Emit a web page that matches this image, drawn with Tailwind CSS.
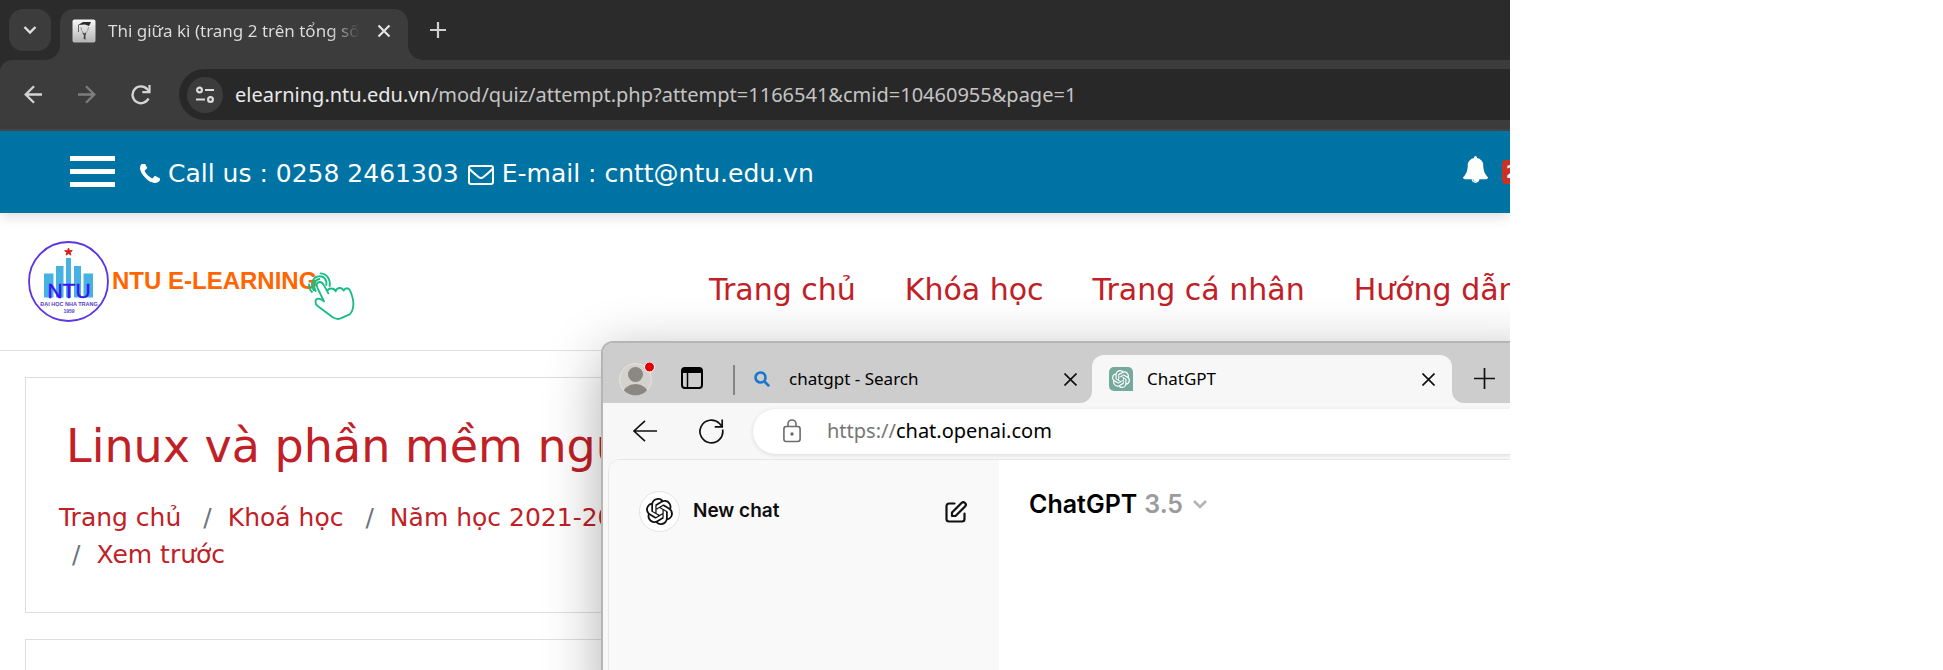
<!DOCTYPE html>
<html lang="vi">
<head>
<meta charset="utf-8">
<meta name="viewport" content="width=device-width, initial-scale=1">
<title>Thi giữa kì (trang 2 trên tổng số)</title>
<script src="https://cdn.jsdelivr.net/npm/@tailwindcss/browser@4"></script>
</head>
<body class="bg-white">
<svg class="hidden" aria-hidden="true">
  <symbol id="knot" viewBox="0 0 24 24"><path d="M22.2819 9.8211a5.9847 5.9847 0 0 0-.5157-4.9108 6.0462 6.0462 0 0 0-6.5098-2.9A6.0651 6.0651 0 0 0 4.9807 4.1818a5.9847 5.9847 0 0 0-3.9977 2.9 6.0462 6.0462 0 0 0 .7427 7.0966 5.98 5.98 0 0 0 .511 4.9107 6.051 6.051 0 0 0 6.5146 2.9001A5.9847 5.9847 0 0 0 13.2599 24a6.0557 6.0557 0 0 0 5.7718-4.2058 5.9894 5.9894 0 0 0 3.9977-2.9001 6.0557 6.0557 0 0 0-.7475-7.0729zm-9.022 12.6081a4.4755 4.4755 0 0 1-2.8764-1.0408l.1419-.0804 4.7783-2.7582a.7948.7948 0 0 0 .3927-.6813v-6.7369l2.02 1.1686a.071.071 0 0 1 .038.052v5.5826a4.504 4.504 0 0 1-4.4945 4.4944zm-9.6607-4.1254a4.4708 4.4708 0 0 1-.5346-3.0137l.142.0852 4.783 2.7582a.7712.7712 0 0 0 .7806 0l5.8428-3.3685v2.3324a.0804.0804 0 0 1-.0332.0615L9.74 19.9502a4.4992 4.4992 0 0 1-6.1408-1.6464zM2.3408 7.8956a4.485 4.485 0 0 1 2.3655-1.9728V11.6a.7664.7664 0 0 0 .3879.6765l5.8144 3.3543-2.0201 1.1685a.0757.0757 0 0 1-.071 0l-4.8303-2.7865A4.504 4.504 0 0 1 2.3408 7.872zm16.5963 3.8558L13.1038 8.364 15.1192 7.2a.0757.0757 0 0 1 .071 0l4.8303 2.7913a4.4944 4.4944 0 0 1-.6765 8.1042v-5.6772a.79.79 0 0 0-.407-.667zm2.0107-3.0231l-.142-.0852-4.7735-2.7818a.7759.7759 0 0 0-.7854 0L9.409 9.2297V6.8974a.0662.0662 0 0 1 .0284-.0615l4.8303-2.7866a4.4992 4.4992 0 0 1 6.6802 4.66zM8.3065 12.863l-2.02-1.1638a.0804.0804 0 0 1-.038-.0567V6.0742a4.4992 4.4992 0 0 1 7.3757-3.4537l-.142.0805L8.704 5.459a.7948.7948 0 0 0-.3927.6813zm1.0976-2.3654l2.602-1.4998 2.6069 1.4998v2.9994l-2.5974 1.4997-2.6067-1.4997Z"/></symbol>
</svg>
<div class="mr-[433px] min-w-0">
<div class="relative flex h-screen flex-col overflow-hidden bg-white">

  <!-- Chrome tab strip -->
  <div class="flex h-15 shrink-0 items-end bg-[#2b2b2b] pl-[9px]">
    <button aria-label="Tìm kiếm thẻ" class="mb-[9px] flex size-[42px] shrink-0 items-center justify-center rounded-[14px] bg-[#3c3c3c]">
      <svg class="size-4" viewBox="0 0 16 16" fill="none" stroke="#dedede" stroke-width="2.4"><path d="M2.500 5l5.500 5.500L13.500 5"/></svg>
    </button>
    <div class="relative ml-[9px] flex h-[51px] w-[348px] shrink-0 items-center rounded-t-[14px] bg-[#3c3c3c] pb-2 pl-3 pr-[17px]">
      <svg class="absolute -left-[15px] bottom-0 size-[15px]" viewBox="0 0 15 15" fill="#3c3c3c"><path d="M15 0v15H0A15 15 0 0 0 15 0"/></svg>
      <svg class="absolute -right-[15px] bottom-0 size-[15px]" viewBox="0 0 15 15" fill="#3c3c3c"><path d="M0 0v15h15A15 15 0 0 1 0 0"/></svg>
      <svg class="size-6 shrink-0" viewBox="0 0 24 24"><defs><linearGradient id="fav" x2="0" y2="1"><stop stop-color="#f8f8f8"/><stop offset="1" stop-color="#b4b4b4"/></linearGradient></defs><rect x=".5" y=".5" width="23" height="23" rx="2" fill="url(#fav)"/><path d="M6 6l5-3h8l-2 4-4-1.500z" fill="#2a2a2a"/><path d="M6.500 6v7" stroke="#666" fill="none"/><path d="M9 8q0 4 2.500 6M16.500 8q0 4-3 6" stroke="#999" fill="none"/><path d="M10 13.500l2.500 1 2-1-1 3v4.500l-2-1.500.5-3z" fill="#444"/></svg>
      <span class="ml-3 min-w-0 flex-1 overflow-hidden whitespace-nowrap bg-linear-to-r from-[#dfdfdf] from-88% to-transparent bg-clip-text font-['Noto_Sans','Open_Sans',sans-serif] text-[17px] leading-6 text-transparent">Thi giữa kì (trang 2 trên tổng số</span>
      <button aria-label="Đóng thẻ" class="ml-[17px] shrink-0"><svg class="size-[14px]" viewBox="0 0 14 14" stroke="#e4e4e4" stroke-width="2.200"><path d="M1.500 1.500l11 11M12.500 1.500l-11 11"/></svg></button>
    </div>
    <button aria-label="Thẻ mới" class="mb-[22px] ml-[22px] shrink-0"><svg class="size-4" viewBox="0 0 16 16" stroke="#d0d0d0" stroke-width="2.200"><path d="M8 0v16M0 8h16"/></svg></button>
  </div>

  <!-- Chrome toolbar -->
  <div class="shrink-0 bg-[#2b2b2b]">
    <div class="flex h-[71px] items-center rounded-tl-[12px] border-b-2 border-[#474747] bg-[#3c3c3c] pl-6">
      <button aria-label="Quay lại" class="shrink-0"><svg class="size-[19px]" viewBox="0 0 19 19" fill="none" stroke="#d4d4d4" stroke-width="2.300"><path d="M18 9.500H2M10 1.200L1.700 9.500l8.300 8.300"/></svg></button>
      <button aria-label="Tiến" class="ml-[34px] shrink-0"><svg class="size-[19px]" viewBox="0 0 19 19" fill="none" stroke="#7d7d7d" stroke-width="2.300"><path d="M1 9.500h16M9 1.200l8.300 8.300L9 17.800"/></svg></button>
      <button aria-label="Tải lại" class="ml-[35px] shrink-0"><svg class="size-5" viewBox="0 0 20 20" fill="none" stroke="#d4d4d4" stroke-width="2.400"><path d="M17.500 13.500A8.400 8.400 0 1 1 16.300 4.300L18 6"/><path d="M18.500 0v7.200h-7.200" stroke-width="2.200"/></svg></button>
      <div class="ml-7 flex h-[51px] min-w-0 flex-1 items-center rounded-l-full bg-[#282828] pl-2">
        <button aria-label="Thông tin trang" class="flex size-9 shrink-0 items-center justify-center rounded-full bg-[#3c3c3c]">
          <svg class="size-5" viewBox="0 0 20 20" fill="none" stroke="#dcdcdc" stroke-width="2.200"><circle cx="4.500" cy="5" r="2.400"/><path d="M10 5h9M1 14.500h9"/><circle cx="15.500" cy="14.500" r="2.400"/></svg>
        </button>
        <p class="ml-3 whitespace-nowrap font-['Noto_Sans','Open_Sans',sans-serif] text-[20px] leading-7 text-[#c4c4c4]"><span class="text-[#e8e8e8]">elearning.ntu.edu.vn</span>/mod/quiz/attempt.php?attempt=1166541&amp;cmid=10460955&amp;page=1</p>
      </div>
    </div>
  </div>

  <!-- Contact bar -->
  <div class="relative z-10 flex h-[82px] shrink-0 items-center bg-[#0073a5] pl-[70px] font-[Verdana,'DejaVu_Sans',sans-serif] text-[25px] text-white shadow-[0_4px_12px_rgba(0,0,0,0.12)]">
    <button aria-label="Menu" class="mb-[2px] flex w-[45px] shrink-0 flex-col gap-2"><span class="h-[5px] bg-white"></span><span class="h-[5px] bg-white"></span><span class="h-[5px] bg-white"></span></button>
    <svg class="ml-[25px] mt-1 size-5 shrink-0" viewBox="192 192 1408 1408" fill="#fff"><path d="M1600 1240q0 27-10 70.500t-21 68.500q-21 50-122 106-94 51-186 51-27 0-53-3.500t-57.500-12.500-47-14.500-55.500-20.500-49-18q-98-35-175-83-127-79-264-216t-216-264q-48-77-83-175-3-9-18-49t-20.500-55.500-14.500-47-12.500-57.500-3.500-53q0-92 51-186 56-101 106-122 25-11 68.500-21t70.500-10q14 0 21 3 18 6 53 76 11 19 30 54t35 63.500 31 53.500q3 4 17.500 25t21.500 35.500 7 28.500q0 20-28.500 50t-62 55-62 53-28.500 46q0 9 5 22.500t8.500 20.500 14 24 11.500 19q76 137 174 235t235 174q2 1 19 11.500t24 14 20.500 8.500 22.500 5q18 0 46-28.500t53-62 55-62 50-28.500q14 0 28.500 7t35.500 21.500 25 17.500q25 15 53.500 31t63.500 35 54 30q70 35 76 53 3 7 3 21z"/></svg>
    <span class="ml-2 mt-1 whitespace-nowrap">Call us : 0258 2461303</span>
    <svg class="ml-[9px] mt-[6px] h-5 w-[26px] shrink-0" viewBox="0 0 26 20" fill="none" stroke="#fff" stroke-width="2"><rect x="1" y="1" width="24" height="18" rx="2"/><path d="M1.500 4c3 3 6 5.500 9 8q2.500 2 5 0c3-2.500 6-5 9-8"/></svg>
    <a href="mailto:cntt@ntu.edu.vn" class="ml-2 mt-1 whitespace-nowrap">E-mail : cntt@ntu.edu.vn</a>
    <button aria-label="Thông báo, 2 mới" class="-mr-3 ml-auto flex shrink-0 items-center">
      <svg class="mb-[5px] size-[27px]" viewBox="0 0 1792 1792" fill="#fff"><path d="M912 1696q0-16-16-16-59 0-101.500-42.500t-42.500-101.500q0-16-16-16t-16 16q0 73 51.500 124.500t124.500 51.500q16 0 16-16zm816-288q0 52-38 90t-90 38h-448q0 106-75 181t-181 75-181-75-75-181h-448q-52 0-90-38t-38-90q50-42 91-88t85-119.500 74.500-158.500 50-206 19.500-260q0-152 117-282.500t307-158.500q-8-19-8-39 0-40 28-68t68-28 68 28 28 68q0 20-8 39 190 28 307 158.500t117 282.500q0 139 19.500 260t50 206 74.500 158.500 85 119.500 91 88z"/></svg>
      <span class="ml-[13px] w-5 rounded bg-[#ca3120] pl-1 text-left text-[18px] font-bold leading-6">2</span>
    </button>
  </div>

  <!-- Site header -->
  <header class="flex h-[138px] shrink-0 items-center border-b border-[#dee2e6] pl-7 font-[Verdana,'DejaVu_Sans',sans-serif]">
    <a href="#" aria-label="NTU E-Learning" class="shrink-0">
      <svg class="h-[82px] w-[328px]" viewBox="0 0 328 82">
        <circle cx="40.500" cy="40.500" r="39.500" fill="#fff" stroke="#5b35e8" stroke-width="1.800"/>
        <path d="M40.500 7l.9 2.700h2.900l-2.300 1.700.9 2.700-2.400-1.700-2.400 1.700.9-2.700-2.300-1.700h2.900z" fill="#d8201c" stroke="#d8201c"/>
        <path d="M16 32.500h9.500V56.500h-9.500zM28 25h7.500v31.500H28zM38 17h5v39.500h-5zM46 25h7v31.500h-7zM55.500 32.500H65v24h-9.500z" fill="#45b2e2"/>
        <text x="41" y="56.500" text-anchor="middle" font-family="Liberation Sans" font-size="21" fill="#3a10f5" stroke="#3a10f5" stroke-width=".5">NTU</text>
        <text x="41" y="65" text-anchor="middle" font-family="Liberation Sans" font-size="5.500" font-weight="700" fill="#5540c8">ĐẠI HỌC NHA TRANG</text>
        <text x="41" y="71.500" text-anchor="middle" font-family="Liberation Sans" font-size="5" font-weight="700" fill="#5540c8">1959</text>
        <text x="84" y="48" font-family="Liberation Sans" font-size="24" font-weight="700" fill="#ff6600">NTU E-LEARNING</text>
        <g transform="translate(268 20) scale(.3333)" fill="none" stroke="#16bd83" stroke-width="5.500" stroke-linecap="round" stroke-linejoin="round">
          <path d="M84 121L64 80C60 70 62 64 71 63C78 63 81 67 84 73L97 97M94 90C98 80 113 80 119 91C122 79 137 77 143 89C148 79 158 80 162 88C170 106 173 118 172 132C171 146 167 155 161 160L132 173C124 176 117 173 110 169L65 135C56 128 56 115 66 113C72 112 78 117 84 121"/>
          <path d="M54 88C42 74 48 48 68 46C84 44 93 56 91 72"/><path d="M48 93C42 88 39 80 39 70M74 37C94 38 104 56 101 75"/><path d="M59 90C50 76 55 56 70 54"/>
        </g>
      </svg>
    </a>
    <nav class="ml-[353px] flex gap-[49px] whitespace-nowrap pt-4 text-[30px] text-[#c02026]">
      <a href="#">Trang chủ</a><a href="#">Khóa học</a><a href="#">Trang cá nhân</a><a href="#">Hướng dẫn</a>
    </nav>
  </header>

  <!-- Course title and breadcrumb -->
  <main class="flex flex-1 flex-col gap-[26px] pl-[25px] pt-[26px] font-[Verdana,'DejaVu_Sans',sans-serif] text-[#c02026]">
    <section class="h-[236px] shrink-0 border border-r-0 border-[#dedede] pl-[33px] pt-10">
      <h1 class="whitespace-nowrap pl-[7px] text-[46px] leading-[56px]">Linux và phần mềm nguồn mở</h1>
      <ol class="mt-[25px] flex whitespace-nowrap text-[25px] leading-[37px]">
        <li><a href="#">Trang chủ</a></li>
        <li class="flex gap-4 pl-[22px]"><span class="text-[#6c757d]">/</span><a href="#">Khoá học</a></li>
        <li class="flex gap-4 pl-[22px]"><span class="text-[#6c757d]">/</span><a href="#">Năm học 2021-2022</a></li>
      </ol>
      <ol class="flex whitespace-nowrap text-[25px] leading-[37px]">
        <li class="flex gap-4 pl-[13px]"><span class="text-[#6c757d]">/</span><a href="#">Xem trước</a></li>
      </ol>
    </section>
    <section class="flex-1 border border-b-0 border-r-0 border-[#dedede]"></section>
  </main>

  <!-- Edge window on top of the page -->
  <div class="absolute -bottom-10 left-[601px] -right-10 top-[341px] z-20 flex flex-col overflow-hidden rounded-tl-[12px] border-2 border-[#b5b5b5] bg-[#f7f7f7] pr-[38px] shadow-[0_14px_56px_rgba(0,0,0,0.32)]">
    <div class="-mr-[38px] flex h-15 shrink-0 items-end bg-[#cdcdcd] pl-4">
      <button aria-label="Profile" class="mb-[7px] shrink-0">
        <svg class="h-[34px] w-9" viewBox="0 0 36 34"><defs><clipPath id="av"><circle cx="16.500" cy="17.500" r="16"/></clipPath></defs><circle cx="16.500" cy="17.500" r="16" fill="#d4d2ce" stroke="#e6e4e0"/><g clip-path="url(#av)" fill="#8b8783"><circle cx="16.500" cy="12.500" r="7.500"/><ellipse cx="16.500" cy="32" rx="12.500" ry="10"/></g><circle cx="30.500" cy="5" r="5" fill="#e10000" stroke="#fff"/></svg>
      </button>
      <button aria-label="Tab actions" class="mb-[14px] ml-[26px] shrink-0"><svg class="size-[22px]" viewBox="0 0 22 22" fill="none" stroke="#000" stroke-width="2"><rect x="1" y="1" width="20" height="20" rx="3"/><path d="M1 3.500h20" stroke-width="5"/><path d="M6.500 6v15" stroke-width="1.500"/></svg></button>
      <span class="mb-2 ml-[30px] h-[30px] w-[2px] shrink-0 bg-[#858585]"></span>
      <div class="mb-2 ml-[19px] flex h-8 w-[323px] shrink-0 items-center font-['Noto_Sans','Open_Sans',sans-serif] text-[17px]">
        <svg class="size-4 shrink-0" viewBox="0 0 16 16" fill="none" stroke="#1878d0" stroke-width="2.600"><circle cx="6.500" cy="6.500" r="5"/><path d="M10 10l5.200 5.200"/></svg>
        <span class="ml-[19px] flex-1">chatgpt - Search</span>
        <button aria-label="Close tab"><svg class="size-[13px]" viewBox="0 0 13 13" stroke="#111" stroke-width="1.700"><path d="M.5.5l12 12M12.500.5l-12 12"/></svg></button>
      </div>
      <div class="relative ml-[15px] flex h-12 w-[360px] shrink-0 items-center rounded-t-[12px] bg-[#f7f7f7] pl-[17px] pr-[17px] font-['Noto_Sans','Open_Sans',sans-serif] text-[17px]">
        <svg class="absolute -left-3 bottom-0 size-3" viewBox="0 0 12 12" fill="#f7f7f7"><path d="M12 0v12H0A12 12 0 0 0 12 0"/></svg>
        <svg class="absolute -right-3 bottom-0 size-3" viewBox="0 0 12 12" fill="#f7f7f7"><path d="M0 0v12h12A12 12 0 0 1 0 0"/></svg>
        <span class="flex size-6 shrink-0 items-center justify-center rounded-[5px] rounded-br-none bg-[#75a99c]"><svg class="size-[18px]" fill="#fff"><use href="#knot"/></svg></span>
        <span class="ml-[14px] flex-1">ChatGPT</span>
        <button aria-label="Close tab"><svg class="size-[13px]" viewBox="0 0 13 13" stroke="#111" stroke-width="1.700"><path d="M.5.5l12 12M12.500.5l-12 12"/></svg></button>
      </div>
      <button aria-label="New tab" class="mb-[14px] ml-[22px] shrink-0"><svg class="size-[21px]" viewBox="0 0 21 21" stroke="#111" stroke-width="1.700"><path d="M10.500 0v21M0 10.500h21"/></svg></button>
    </div>
    <div class="flex h-14 shrink-0 items-center pl-[30px]">
      <button aria-label="Back" class="shrink-0"><svg class="h-[22px] w-6" viewBox="0 0 24 22" fill="none" stroke="#111" stroke-width="1.600"><path d="M24 11H1M12 .8L1 11l11 10.200"/></svg></button>
      <button aria-label="Refresh" class="ml-[42px] shrink-0"><svg class="size-[25px]" viewBox="0 0 25 25" fill="none" stroke="#111" stroke-width="1.700"><path d="M23.600 10.500A11.400 11.400 0 1 1 20.500 4.500L23 7.500M23.200 .5v7.300h-7.500"/></svg></button>
      <div class="-mr-10 ml-[29px] flex h-[45px] min-w-0 flex-1 items-center rounded-l-full bg-white pl-[30px] shadow-[0_1px_4px_rgba(0,0,0,0.12)]">
        <svg class="h-6 w-[18px] shrink-0" viewBox="0 0 18 24" fill="none" stroke="#6b6b6b" stroke-width="1.600"><rect x=".9" y="7.500" width="16.200" height="15" rx="2.500"/><path d="M5 7.500V5a4 4 0 0 1 8 0v2.500"/><circle cx="9" cy="15" r=".9" fill="#6b6b6b"/></svg>
        <p class="ml-[26px] whitespace-nowrap font-['Noto_Sans','Open_Sans',sans-serif] text-[20px] text-black"><span class="text-[#767676]">https://</span>chat.openai.com</p>
      </div>
    </div>
    <div class="-mr-10 ml-[5px] flex flex-1 overflow-hidden rounded-tl-[12px] border border-[#e6e6e6] bg-white font-[Inter,'Liberation_Sans',sans-serif]">
      <aside class="w-[390px] shrink-0 bg-[#f9f9f9] pl-[30px] pr-8 pt-[31px]">
        <div class="flex items-center">
          <span class="flex size-[41px] items-center justify-center rounded-full border border-[#e3e3e3] bg-white"><svg class="size-[27px]" fill="#111"><use href="#knot"/></svg></span>
          <a href="#" class="ml-[13px] flex-1 text-[19px] font-semibold text-[#0d0d0d]">New chat</a>
          <button aria-label="New chat"><svg class="size-[22px]" viewBox="0 0 22 22" fill="none" stroke="#111" stroke-width="2.200" stroke-linecap="round" stroke-linejoin="round"><path d="M9.500 2.500H4a2.500 2.500 0 0 0-2.500 2.500v13A2.500 2.500 0 0 0 4 20.500h13a2.500 2.500 0 0 0 2.500-2.500v-5.500"/><path d="M7 15v-3.500l9.500-9.500a2.200 2.200 0 0 1 3.500 3.500L10.500 15z"/></svg></button>
        </div>
      </aside>
      <div class="pl-[30px] pt-7">
        <button class="flex items-center text-[25px] font-semibold leading-8 text-black">ChatGPT<span class="ml-[7px] text-[#9b9b9b]">3.5</span><svg class="ml-[10px] size-[14px]" viewBox="0 0 14 14" fill="none" stroke="#b4b4b4" stroke-width="2.600"><path d="M1 4l6 6 6-6"/></svg></button>
      </div>
    </div>
  </div>
</div>
</div>
</body>
</html>
